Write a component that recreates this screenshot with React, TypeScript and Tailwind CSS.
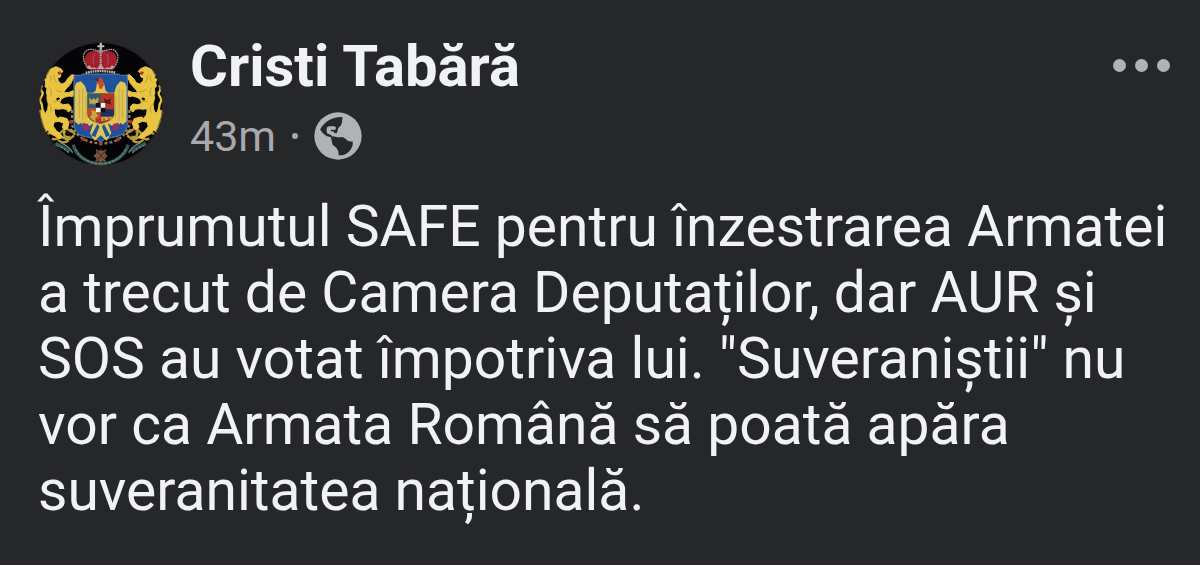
import { useState } from 'react';

interface Post {
  author: string;
  age: string;
  text: string;
}

const post: Post = {
  author: 'Cristi Tabără',
  age: '43m',
  text: 'Împrumutul SAFE pentru înzestrarea Armatei a trecut de Camera Deputaților, dar AUR și SOS au votat împotriva lui. "Suveraniștii" nu vor ca Armata Română să poată apăra suveranitatea națională.',
};

// Left supporter, the right one is the same shape flipped
function Lion() {
  return (
    <g>
      <path
        fill="#e9c443"
        stroke="#e9c443"
        strokeWidth="3"
        strokeLinejoin="round"
        d="M56 120l12-6 10-4 14 6 7 8-4 4-8-1-2 5 8 2-2 7-8 3 2 10 10 8 10-4 8-12 12-12 10 2 2 8-8 2-6 14-10 12-8 8-4 8 14 0 14-6 4 8-6 10-10-2-14 4-10 6-4 12 12 4 14-2 8 8 0 10-8 6-6-8-12-2-12 2-8 12 4 10 16 2 14 4 6 12-4 16-10 6-6-8 4-12-14-6-14 2-4 12 10 14 12 10 8 10-12 4-12-8-12-6-10-12-6 6-12-6-4-14-2-22-4-14 4-10 10 2 8 8 6-12 2-16-4-14-2-18 2-16-6-4 2-14-4-8 8-4-4-10z"
      />
      <path
        fill="none"
        stroke="#e9c443"
        strokeWidth="7"
        d="M42 246c-10-8-2-20-10-30s8-16 6-28c-6-6-8-16 0-22"
      />
      <path
        fill="none"
        stroke="#a98a30"
        strokeWidth="2"
        d="M60 136c4 6 4 12 0 18M72 134c-2 10 2 18 8 24M58 172c6 8 8 18 4 26M76 178c6 6 12 8 20 6M56 222c8 6 10 16 4 26M70 216c8-4 14-4 22 0"
      />
      <path fill="#0a0908" d="M44 186l6 8-2 18-6-4zM78 206l8-4 4 4-8 6zM74 238l16 2 4 14-10 10-8-10z" />
      <path fill="#b3342c" d="M82 126l10-2 2 8-9 2z" />
    </g>
  );
}

function Scroll() {
  return (
    <g fill="none">
      <path
        stroke="#b99a3a"
        strokeWidth="7"
        d="M52 312c14-12 26 12 40-4s18-14 34-2M66 326c16 8 22-12 36-2s18 2 30-8M106 302c-10 10 0 24 14 18M84 330c10 10 24 8 32 2M122 298l14 16"
      />
      <path stroke="#35595c" strokeWidth="10" d="M76 340c16 8 30 12 42 26M130 344c6 30 38 56 82 58" />
      <path stroke="#8f9f7a" strokeWidth="3" strokeDasharray="7 5" d="M80 346c14 6 26 12 38 24M138 358c10 24 38 42 74 44" />
      <path stroke="#6a8c94" strokeWidth="4" d="M92 338c14 6 26 12 36 30" />
    </g>
  );
}

function Avatar() {
  return (
    <svg viewBox="27 36 372 372" className="size-[124px] shrink-0" role="img" aria-label={post.author}>
      <defs>
        <clipPath id="avatar-clip">
          <circle cx="213" cy="222" r="186" />
        </clipPath>
      </defs>
      <g clipPath="url(#avatar-clip)">
        <rect x="27" y="36" width="372" height="372" fill="#050507" />
        <Scroll />
        <g transform="translate(424 0) scale(-1 1)">
          <Scroll />
        </g>
        <Lion />
        <g transform="translate(424 0) scale(-1 1)">
          <Lion />
        </g>

        {/* Collar and cross */}
        <path fill="none" stroke="#8d7a55" strokeWidth="7" strokeDasharray="9 6" d="M126 240v44c8 28 34 54 86 56s78-28 86-56v-44" />
        <g fill="#a23a32">
          <circle cx="123" cy="275" r="6" />
          <circle cx="301" cy="275" r="6" />
          <circle cx="160" cy="328" r="6" />
          <circle cx="212" cy="341" r="6" />
          <circle cx="264" cy="328" r="6" />
        </g>
        <path fill="#76523c" d="M197 357l11 6 4-5 6 5 11-6-4 13 8 8-8 7 3 12-11-4-5 7-6-7-11 4 4-12-9-7 9-8z" />
        <path stroke="#2b1a16" strokeWidth="2" d="M200 363l26 28M226 363l-26 28" />

        {/* Shield */}
        <path fill="#1f529c" stroke="#5f7fa8" strokeWidth="3" d="M132 136h20l6-4h108l6 4h20v146c-2 24-14 34-34 38-18 4-34 6-46 16-12-10-28-12-46-16-20-4-32-14-34-38z" />
        <path
          fill="#e0c552"
          d="M212 154l10 6 5 22 8 6h18l6-20 12-14 14 4 5 12v104l-12 10-6-6-8 10-8-6-10 6-12-8 10 30-14 22-18-16-18 16-14-22 10-30-12 8-10-6-8 6-8-10-6 6-12-10V170l5-12 14-4 12 14 6 20h18l8-6 4-22z"
        />
        <path stroke="#b39a3e" strokeWidth="2" fill="none" d="M148 180v84M158 176v96M277 180v84M267 176v96M168 200v66M257 200v66" />
        <path fill="#c94a2a" d="M199 152l10-10 9 6 4 16-6 12h-8l-3-14-8-4z" />
        <path fill="#303f70" d="M192 146l12-4 4 10-8 4z" />
        <path fill="#1f529c" d="M202 282l-18 34 12 6 12-32zM222 282l18 34-12 6-12-32z" />
        <path fill="#8f3260" d="M158 278l16 4 6 14-12 8-12-10zM266 278l-16 4-6 14 12 8 12-10z" />

        {/* Quartered inner shield */}
        <path fill="#b32d2b" stroke="#584c28" strokeWidth="2" d="M173 191h79v62c-4 18-20 22-40 28-20-6-36-10-39-28z" />
        <path fill="#295c75" d="M173 191h39v43h-39z" />
        <path fill="#b83428" d="M212 191h40v43h-40z" />
        <path fill="#c44a25" d="M173 234h39v34c-22-2-38-8-39-18z" />
        <path fill="#1d315d" d="M212 238h40v15l-4 7h-36z" />
        <path fill="#c9a642" d="M177 202l8 8 6-6 5 5 9-8v10l-4 14-6-6-4 7-5-6-7 4zM184 240l10 4 8-4-3 11 6 6-9 8 2 10-11-6-9-8 8-6z" />
        <path fill="#531b22" d="M221 204l10 7 13-6-4 11 6 8-17-4-9 6 4-11z" />
        <path fill="#c9a642" d="M214 260h35l-6 8-14 3-15 3z" />
        <path fill="#b03b37" d="M220 264l6 4-6 4zM234 262l6 3-6 4z" />
        <path fill="#111" d="M198 219h28v28h-28z" />
        <path fill="#f4f4f4" d="M198 233h14v14h-14zM212 219h14v14h-14z" />

        {/* Crown */}
        <path fill="#a51e2b" d="M172 116c-18-30-2-52 18-52 12-6 34-6 46 0 20 0 34 22 16 52z" />
        <g fill="none" stroke="#a9a3a3" strokeWidth="4">
          <path strokeDasharray="5 2" d="M173 114c-26-36-8-64 20-54 8 2 14 4 19 6 5-2 11-4 19-6 28-10 46 18 20 54" />
          <path strokeWidth="6" strokeDasharray="5 2" d="M212 66v44" />
        </g>
        <path fill="none" stroke="#8f7d80" strokeWidth="2" d="M194 72c-6 10-6 22-2 32M230 72c6 10 6 22 2 32" />
        <path fill="#b9b7b6" d="M209 38h7v8h7v6h-7v9h-7v-9h-7v-6h7z" />
        <circle cx="212" cy="64" r="6" fill="#8796a5" />
        <path fill="#b6a9a6" d="M172 110l6-4 7 8 8-2 7 4 6-6 6-10 6 10 6 6 7-4 8 2 7-8 6 4-4 8h-72z" />
        <path fill="#8e2635" d="M176 117h73l-2 4h-69z" />
        <path fill="none" stroke="#bcbcbc" strokeWidth="7" strokeDasharray="5 2" d="M167 128c30-6 60-6 90 0" />
      </g>
      <circle cx="213" cy="222" r="185" fill="none" stroke="#3a3c3d" strokeWidth="2" />
    </svg>
  );
}

function GlobeIcon() {
  return (
    <svg viewBox="0 0 142 142" className="size-12" role="img" aria-label="Public">
      <circle cx="71" cy="71" r="70" fill="#b0b2b6" />
      <path
        fill="#262729"
        d="M84 15C58 14 32 26 18 52l8 11 11 8 13 4 4-2-4-6-10-3-3-6 1-12 6-4h17l4 4-1 6-8 1-6-1v5l8 1 2 4 7 1 2-5 3-11 8-8c3-7 4-14 4-24z"
      />
      <path
        fill="#262729"
        d="M50 74l8-2 10 3h18l8 5 7 6 14 2-1 12-6 12c-6 8-14 14-24 16h-11l-1-12-6-10-11-9-3-13z"
      />
    </svg>
  );
}

export default function App() {
  const [menuOpen, setMenuOpen] = useState(false);

  return (
    <main className="min-h-screen border-b border-[#2a252c] bg-[#262729] px-[38px] pt-10 pb-8 font-['Roboto',sans-serif] text-[#f1f2f6]">
      <article>
        <header className="flex items-start">
          <div className="pt-0.5 pl-px">
            <Avatar />
          </div>
          <div className="ml-[27px] flex-1">
            <h1 className="text-[58px] leading-[52px] font-bold">{post.author}</h1>
            <div className="mt-5 flex h-12 items-center text-[#a7a9ad]">
              <span className="text-[43px] leading-12">{post.age}</span>
              <span className="mx-4 size-[6px] rounded-full bg-[#a7a9ad]" />
              <GlobeIcon />
            </div>
          </div>
          <button
            type="button"
            aria-label="More options"
            aria-expanded={menuOpen}
            onClick={() => setMenuOpen(!menuOpen)}
            className="-mr-2 flex h-[50px] items-center gap-[9px]"
          >
            <span className="size-[13px] rounded-full bg-[#b0b2b5]" />
            <span className="size-[13px] rounded-full bg-[#b0b2b5]" />
            <span className="size-[13px] rounded-full bg-[#b0b2b5]" />
          </button>
        </header>

        <p className="-mr-2 mt-7 text-[57px] leading-[66px]">{post.text}</p>
      </article>
    </main>
  );
}
